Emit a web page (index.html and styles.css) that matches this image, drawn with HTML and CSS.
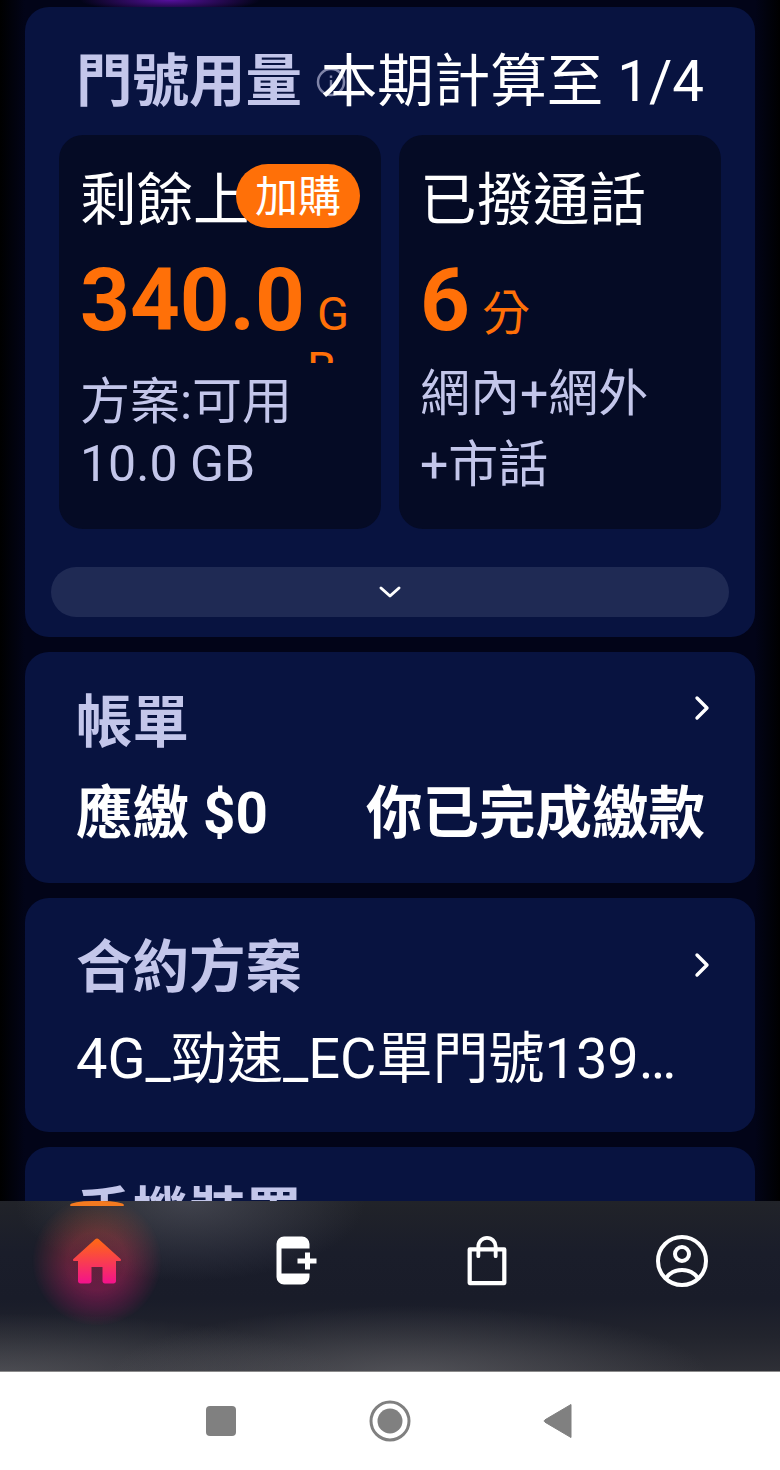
FILE: index.html
```html
<!DOCTYPE html>
<html lang="zh-Hant">
<head>
<meta charset="utf-8">
<title>門號用量</title>
<link rel="stylesheet" href="styles.css">
</head>
<body>
<div class="screen">
  <main class="content">
    <section class="card usage">
      <div class="usage-head">
        <div class="usage-title">
          <h2 class="title">門號用量</h2>
          <svg class="info" viewBox="0 0 30 30"><circle cx="15" cy="15" r="13" fill="none" stroke="#7f84a8" stroke-width="2.5"/><rect x="13.8" y="13" width="2.4" height="9" fill="#7f84a8"/><rect x="13.8" y="8.5" width="2.4" height="2.4" fill="#7f84a8"/></svg>
        </div>
        <div class="period">本期計算至 1/4</div>
      </div>
      <div class="tiles">
        <div class="tile">
          <div class="tile-label">剩餘上</div>
          <span class="badge">加購</span>
          <div class="value-row clipped">
            <span class="value">340.0</span>
            <span class="unit unit-wrap">GB</span>
          </div>
          <div class="tile-sub">方案:可用<br>10.0 GB</div>
        </div>
        <div class="tile">
          <div class="tile-label">已撥通話</div>
          <div class="value-row">
            <span class="value">6</span>
            <span class="unit unit-cjk">分</span>
          </div>
          <div class="tile-sub tile-sub-tall">網內+網外<br>+市話</div>
        </div>
      </div>
      <div class="expander">
        <svg class="chev-down" viewBox="0 0 24 14"><path d="M3 3l9 8 9-8" fill="none" stroke="#fff" stroke-width="3" stroke-linecap="round" stroke-linejoin="round"/></svg>
      </div>
    </section>

    <section class="card bill">
      <div class="card-head">
        <h2 class="title">帳單</h2>
        <svg class="chev-right chev-bill" viewBox="0 0 16 26"><path d="M3 3l10 10-10 10" fill="none" stroke="#fff" stroke-width="3.4" stroke-linecap="round" stroke-linejoin="round"/></svg>
      </div>
      <div class="bill-row">
        <span>應繳 $0</span>
        <span>你已完成繳款</span>
      </div>
    </section>

    <section class="card plan">
      <div class="card-head">
        <h2 class="title">合約方案</h2>
        <svg class="chev-right chev-plan" viewBox="0 0 16 26"><path d="M3 3l10 10-10 10" fill="none" stroke="#fff" stroke-width="3.4" stroke-linecap="round" stroke-linejoin="round"/></svg>
      </div>
      <div class="plan-name">4G_勁速_EC單門號1399上網吃到飽</div>
    </section>

    <section class="card device">
      <h2 class="title">手機裝置</h2>
    </section>
  </main>

  <nav class="nav">
    <div class="tab tab-active">
      <span class="tab-mark"></span>
      <svg class="icon home" viewBox="0 0 50 46">
        <defs><linearGradient id="homeGrad" x1="0" y1="0" x2="0" y2="1"><stop offset="0" stop-color="#ff6a12"/><stop offset="1" stop-color="#f3128c"/></linearGradient></defs>
        <path fill="url(#homeGrad)" d="M25 0.5c.7 0 1.300.3 1.800.8L48.600 21c.8.8.3 2-.8 2H44v20c0 1.400-1.100 2.500-2.500 2.500H33c-1.400 0-2.500-1.100-2.500-2.500V29h-11v14c0 1.400-1.100 2.500-2.500 2.500H8.500C7.100 45.500 6 44.400 6 43V23H2.200c-1.100 0-1.600-1.200-.8-2L23.200 1.300c.5-.5 1.100-.8 1.800-.8z"/>
      </svg>
    </div>
    <div class="tab">
      <svg class="icon" viewBox="0 0 50 50">
        <path fill="#fff" d="M17 .5h18a7.500 7.500 0 0 1 7.500 7.500v4.500h-28v25h28V41a7.500 7.500 0 0 1-7.500 7.500H17A7.500 7.500 0 0 1 9.500 41V8A7.500 7.500 0 0 1 17 .5z"/>
        <path fill="#fff" d="M38 16.500h5v6h6.500v5H43v6h-5v-6h-7.500v-5H38z"/>
      </svg>
    </div>
    <div class="tab">
      <svg class="icon" viewBox="0 0 42 52">
        <path fill="none" stroke="#fff" stroke-width="4.400" stroke-linejoin="round" d="M3 14h36v35H3z"/>
        <path fill="none" stroke="#fff" stroke-width="4" stroke-linecap="round" d="M12 21V11a9 9 0 0 1 18 0v10"/>
      </svg>
    </div>
    <div class="tab">
      <svg class="icon icon-user" viewBox="0 0 52 52">
        <circle cx="26" cy="26" r="24" fill="none" stroke="#fff" stroke-width="4"/>
        <circle cx="26" cy="19" r="7" fill="none" stroke="#fff" stroke-width="4"/>
        <path fill="none" stroke="#fff" stroke-width="4" d="M10 43c4-5.500 10-8 16-8s12 2.500 16 8"/>
      </svg>
    </div>
  </nav>

  <footer class="sysbar">
    <svg class="sys-square" viewBox="0 0 30 30"><rect width="30" height="30" rx="4" fill="#808080"/></svg>
    <svg class="sys-circle" viewBox="0 0 42 42"><circle cx="21" cy="21" r="19" fill="none" stroke="#808080" stroke-width="3"/><circle cx="21" cy="21" r="12.500" fill="#808080"/></svg>
    <svg class="sys-back" viewBox="0 0 30 36"><path d="M28 1.500v33L2 19.200c-1-.7-1-1.700 0-2.400z" fill="#808080" stroke="#808080" stroke-linejoin="round"/></svg>
  </footer>
</div>
</body>
</html>
```

FILE: styles.css
```css
* {
  box-sizing: border-box;
}

html,
body {
  margin: 0;
  padding: 0;
}

body {
  width: 780px;
  height: 1470px;
  overflow: hidden;
  background: #000;
  font-family: Roboto, "Noto Sans CJK TC", sans-serif;
}

.screen {
  display: flex;
  flex-direction: column;
  height: 1470px;
}

.content {
  flex: 1;
  min-height: 0;
  overflow: hidden;
  display: flex;
  flex-direction: column;
  gap: 15px;
  padding: 7px 25px 0;
  background:
    radial-gradient(ellipse 90px 12px at 170px 0, #56109e 0, rgba(86, 16, 158, 0) 100%),
    linear-gradient(90deg, #000 0, #020418 25px, #020418 755px, #000 780px);
}

.card {
  flex: none;
  background: #081340;
  border-radius: 24px;
}

.title {
  margin: 0;
  font-size: 56.500px;
  line-height: 72px;
  font-weight: 700;
  color: #c3c6ea;
  white-space: nowrap;
}

/* usage card */
.usage {
  height: 630px;
  padding: 39px 26px 0;
}

.usage-head {
  display: flex;
  align-items: center;
  justify-content: space-between;
  padding: 0 25px;
  height: 72px;
}

.usage-title {
  display: flex;
  align-items: center;
  gap: 14px;
  margin-right: -30px;
}

.info {
  width: 30px;
  height: 30px;
  flex: none;
}

.period {
  font-size: 56.500px;
  line-height: 72px;
  color: #fff;
  white-space: nowrap;
}

.tiles {
  display: flex;
  gap: 18px;
  margin: 17px 8px 0;
}

.tile {
  position: relative;
  flex: 1;
  height: 394px;
  padding: 29px 21px 0;
  background: #050b25;
  border-radius: 24px;
}

.tile-label {
  font-size: 56.500px;
  line-height: 75px;
  color: #fff;
  white-space: nowrap;
}

.badge {
  position: absolute;
  top: 29px;
  right: 21px;
  width: 124px;
  height: 64px;
  border-radius: 32px;
  background: #ff7008;
  color: #fff;
  font-size: 43px;
  line-height: 66px;
  text-align: center;
}

.value-row {
  display: flex;
  align-items: baseline;
  gap: 12px;
  height: 102px;
  margin-top: 16px;
  color: #ff7008;
}

.clipped {
  gap: 2px;
  height: 108px;
  margin-bottom: 8px;
  overflow: hidden;
}

.value {
  font-size: 87px;
  line-height: 90px;
  font-weight: 700;
}

.unit {
  font-size: 47px;
  line-height: 55px;
}

.unit-cjk {
  font-size: 48px;
}

.unit-wrap {
  width: 44px;
  text-indent: 10px;
  word-break: break-all;
}

.tile-sub {
  font-size: 50px;
  line-height: 62px;
  color: #c3c6ea;
}

.tile-sub-tall {
  margin-top: 2px;
  line-height: 71px;
}

.expander {
  display: flex;
  align-items: center;
  justify-content: center;
  height: 50px;
  margin-top: 38px;
  border-radius: 25px;
  background: #1f2a54;
}

.chev-down {
  width: 24px;
  height: 14px;
}

/* link cards */
.card-head {
  display: flex;
  align-items: flex-start;
  justify-content: space-between;
}

.chev-right {
  width: 16px;
  height: 26px;
}

.chev-bill {
  margin-top: 8px;
}

.chev-plan {
  margin-top: 20px;
}

.bill {
  height: 231px;
  padding: 35px 45px 0 51px;
}

.bill-row {
  display: flex;
  justify-content: space-between;
  margin: 15px 5px 0 0;
  font-size: 56.500px;
  line-height: 80px;
  font-weight: 700;
  color: #fff;
  white-space: nowrap;
}

.plan {
  height: 234px;
  padding: 34px 45px 0 51px;
}

.plan-name {
  width: 606px;
  margin-top: 15px;
  font-size: 56px;
  line-height: 80px;
  color: #fff;
  white-space: nowrap;
  overflow: hidden;
  text-overflow: ellipsis;
}

.device {
  height: 200px;
  padding: 32px 51px 0;
}

/* bottom nav */
.nav {
  flex: none;
  display: grid;
  grid-template-columns: repeat(4, 1fr);
  height: 170px;
  padding-right: 1px;
  background:
    radial-gradient(ellipse 175px 80px at 190px 0, rgba(90, 92, 105, .55) 0, rgba(90, 92, 105, 0) 100%),
    radial-gradient(ellipse 300px 70px at 410px 175px, rgba(105, 105, 110, .6) 0, rgba(105, 105, 110, 0) 100%),
    radial-gradient(ellipse 340px 60px at 0 172px, rgba(105, 105, 110, .5) 0, rgba(105, 105, 110, 0) 100%),
    linear-gradient(180deg, #212329 0, #1a1d2a 30%, #191c29 58%, #22242d 80%, #2e2f36 100%);
}

.tab {
  position: relative;
  height: 119px;
  display: flex;
  align-items: center;
  justify-content: center;
}

.tab-active::before {
  content: "";
  position: absolute;
  left: 50%;
  top: 60px;
  width: 130px;
  height: 130px;
  margin: -65px 0 0 -65px;
  background: linear-gradient(180deg, rgba(255, 100, 30, .25) 10%, rgba(240, 20, 130, .38) 85%);
  -webkit-mask-image: radial-gradient(circle closest-side, #000 45%, transparent 100%);
  mask-image: radial-gradient(circle closest-side, #000 45%, transparent 100%);
}

.tab-mark {
  position: absolute;
  top: 0;
  left: 50%;
  width: 54px;
  height: 5px;
  margin-left: -27px;
  background: #f47a20;
  border-radius: 50% 50% 3px 3px / 100% 100% 1px 1px;
}

.icon {
  position: relative;
  width: 50px;
  height: 50px;
}

.icon-user {
  width: 52px;
  height: 52px;
}

/* system bar */
.sysbar {
  flex: none;
  display: flex;
  align-items: center;
  justify-content: center;
  gap: 132.500px;
  height: 99px;
  padding-right: 1px;
  background: #fff;
  border-top: 1px solid #8a8a8a;
}

.sys-square {
  width: 30px;
  height: 30px;
}

.sys-circle {
  width: 42px;
  height: 42px;
}

.sys-back {
  width: 30px;
  height: 36px;
}
```
